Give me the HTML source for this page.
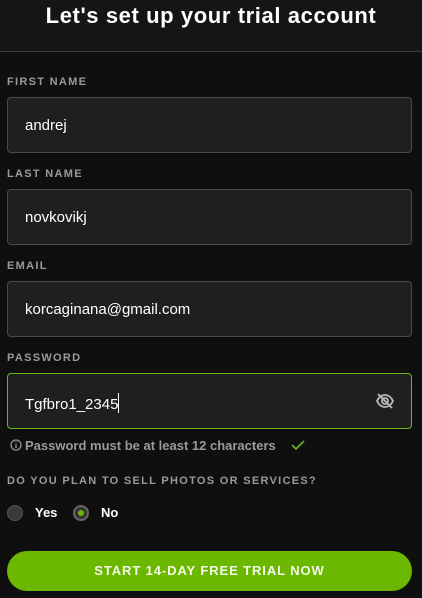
<!DOCTYPE html>
<html><head><style>
*{margin:0;padding:0;box-sizing:border-box}
body{width:422px;height:598px;background:#0f0f0f;font-family:"Liberation Sans",sans-serif;position:relative;overflow:hidden;color:#fff}
.hdr{position:absolute;left:0;top:0;width:422px;height:52px;background:#151515;border-bottom:1px solid #3a3a3a}
.hdr h1{position:absolute;top:3px;width:100%;text-align:center;font-size:22px;font-weight:bold;letter-spacing:0.6px}
.lbl{position:absolute;left:7px;font-size:11px;font-weight:bold;color:#9a9a9a;letter-spacing:1.3px}
.inp{position:absolute;left:7px;width:405px;height:56px;background:#1f1f1f;border:1px solid #4a4a4a;border-radius:4px;font-size:15px;padding:19px 0 0 17px}
.inp.act{border-color:#6cb31c}
.hint{position:absolute;left:10px;top:438px;font-size:13px;font-weight:bold;color:#9a9a9a}
.radio{position:absolute;top:505px;width:16px;height:16px;border-radius:50%;background:#3a3a3a;border:1px solid #555}
.rl{position:absolute;top:505px;font-size:13px;font-weight:bold}
.btn{position:absolute;left:7px;top:551px;width:405px;height:40px;border-radius:20px;background:#6cb700;text-align:center;line-height:40px;font-size:13px;font-weight:bold;letter-spacing:0.9px;color:#f4f9ea}
</style></head><body>
<div class="hdr"><h1>Let's set up your trial account</h1></div>
<div class="lbl" style="top:76px">FIRST NAME</div>
<div class="inp" style="top:97px">andrej</div>
<div class="lbl" style="top:168px">LAST NAME</div>
<div class="inp" style="top:189px">novkovikj</div>
<div class="lbl" style="top:260px">EMAIL</div>
<div class="inp" style="top:281px">korcaginana@gmail.com</div>
<div class="lbl" style="top:352px">PASSWORD</div>
<div class="inp act" style="top:373px">Tgfbro1_2345<span style="display:inline-block;width:1px;height:20px;background:#fff;vertical-align:-4px"></span>
<svg style="position:absolute;right:16px;top:18px" width="20" height="18" viewBox="0 0 20 18" fill="none" stroke="#bbb" stroke-width="1.8"><path d="M2 9c2-4 5-6 8-6s6 2 8 6c-2 4-5 6-8 6s-6-2-8-6z"/><circle cx="10" cy="9" r="3"/><path d="M3 2l14 14"/></svg></div>
<div class="hint"><svg width="12" height="12" viewBox="0 0 12 12" style="vertical-align:-1px;margin-right:3px"><circle cx="6" cy="6" r="5" fill="none" stroke="#9a9a9a" stroke-width="1.2"/><path d="M6 5v4M6 3v1" stroke="#9a9a9a" stroke-width="1.3"/></svg>Password must be at least 12 characters <svg width="14" height="12" viewBox="0 0 14 12" style="margin-left:12px;vertical-align:-1px"><path d="M1 6l4 4 8-8" stroke="#6cb31c" stroke-width="1.6" fill="none"/></svg></div>
<div class="lbl" style="top:475px">DO YOU PLAN TO SELL PHOTOS OR SERVICES?</div>
<div class="radio" style="left:7px"></div><div class="rl" style="left:35px">Yes</div>
<div class="radio" style="left:73px;border:2px solid #666;background:#333"><div style="position:absolute;left:3px;top:3px;width:6px;height:6px;border-radius:50%;background:#6cb700"></div></div><div class="rl" style="left:101px">No</div>
<div class="btn">START 14-DAY FREE TRIAL NOW</div>
</body></html>
